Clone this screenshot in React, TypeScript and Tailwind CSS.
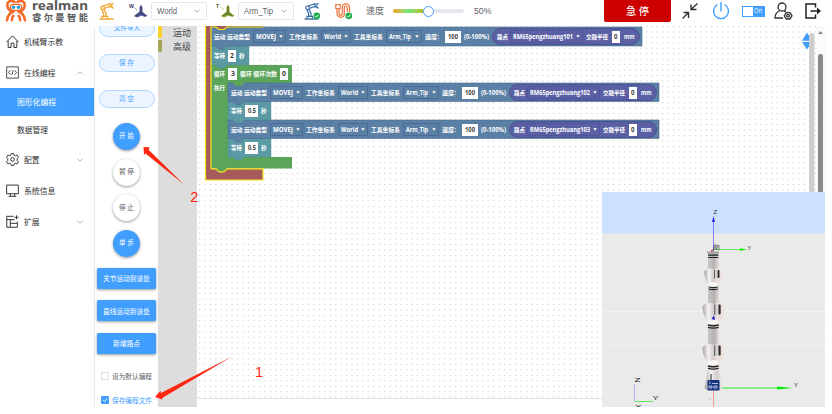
import React from "react";

type Kids = { children?: React.ReactNode };
const FIT = "spacingAndGlyphs";

/* Text fitted to a known width, used for the tiny block and toolbar labels. */
function Label({ w, h = 10, size, children, fill = "#fff", weight = 400, className = "" }: { w: number; h?: number; size: number; children: string; fill?: string; weight?: number; className?: string }) {
  return (
    <svg width={w} height={h} className={`shrink-0 overflow-visible ${className}`}>
      <text x="0" y={h / 2 + size * 0.37} fontSize={size} fontWeight={weight} fill={fill} textLength={w} lengthAdjust={FIT}>
        {children}
      </text>
    </svg>
  );
}

function Logo() {
  return (
    <svg width="22" height="22" viewBox="0 0 22 22" fill="none" className="shrink-0">
      <g stroke="#f26a2a" strokeWidth="2.6" strokeLinecap="round">
        <path d="M9.500 1.800C5 -.5 2.200 2 2.300 5.500C2.500 9 4.500 10.800 7.500 12C4.500 13.500 2.500 16 2 20.300" />
        <path d="M12.500 1.800C17 -.5 19.800 2 19.700 5.500C19.500 9 17.500 10.800 14.500 12C17.500 13.500 19.500 16 20 20.300" />
        <path d="M8.300 16C7 17.200 6.800 18.500 6.800 20.300M13.700 16C15 17.200 15.200 18.500 15.200 20.300" />
      </g>
      <rect x="5.300" y="4.300" width="11.400" height="6" rx="3" fill="#fff" stroke="#f26a2a" strokeWidth="1.300" />
      <circle cx="8.500" cy="7.300" r="1.700" fill="#159bd7" />
      <circle cx="13.500" cy="7.300" r="1.700" fill="#159bd7" />
    </svg>
  );
}

function RobotIcon({ color, check }: { color: string; check?: boolean }) {
  return (
    <svg width="17" height="18" viewBox="0 0 17 18" fill="none" stroke={color} strokeWidth="1.200" className="shrink-0">
      <path d="M.5 17H14.500" strokeWidth="1.400" />
      <path d="M3 16.500V14.300H8.500V16.500M4.700 14V12L3 7.500M7 14V11.500L5 7" />
      <circle cx="3.600" cy="5.800" r="1.800" />
      <path d="M4 4L11 1.800M5.300 6.500L11 4.300M11 1V5H12.800M12.800 2L14.500 1.200M12.800 5L14.500 6.500M12.800 1.500V5" />
      {check && <CheckDot x={12.800} y={13.800} />}
    </svg>
  );
}

function CheckDot({ x, y }: { x: number; y: number }) {
  return (
    <g stroke="none">
      <circle cx={x} cy={y} r="3.400" fill="#1dae4b" />
      <path d={`M${x - 1.700} ${y}l1.300 1.300l2.200 -2.500`} stroke="#fff" strokeWidth="1" fill="none" />
    </g>
  );
}

function CableIcon() {
  return (
    <svg width="18" height="17" viewBox="0 0 18 17" fill="none" stroke="#ee7339" strokeWidth="1.200" className="shrink-0">
      <path d="M.8 1.500H5.200V5.500H.8ZM2 5.500V9.500Q2 14.300 6 14.300Q9.300 14.300 9.300 10.500V5Q9.300 3 10.800 3Q12.300 3 12.300 5V9" />
      <path d="M4 5.500V9.500Q4 12.300 5.700 12.300Q7.300 12.300 7.300 10V4.800Q7.300 .8 10.800 .8Q14.500 .8 14.500 4.800V9" />
      <CheckDot x={13.800} y={12.800} />
    </svg>
  );
}

function AxesIcon({ letter, color, dark }: { letter: string; color: string; dark: string }) {
  return (
    <svg width="19" height="16" viewBox="0 0 19 16" className="shrink-0">
      <text x="0" y="4.500" fontSize="5" fontWeight="700" fill={dark}>{letter}</text>
      <path d="M4.500 4L8 7" stroke={color} strokeWidth=".8" strokeDasharray="1.200 .6" />
      <path d="M12 1.500L13.500 4.500V8.500L16 11L18.500 12.500L16.500 14L12.500 12.800L8 14.500L4.800 13L7.500 11L10.500 8.500V4.500Z" fill={color} />
      <path d="M12 3V10L16.500 12.800M12 10L7 13" stroke={dark} strokeWidth="1" fill="none" />
    </svg>
  );
}

function Chevron({ up, className = "" }: { up?: boolean; className?: string }) {
  return (
    <svg width="6" height="4" viewBox="0 0 6 4" fill="none" stroke="#888" strokeWidth=".7" className={className}>
      <path d={up ? "M.5 3.300L3 .8L5.500 3.300" : "M.5 .7L3 3.200L5.500 .7"} />
    </svg>
  );
}

function Select({ text, w }: { text: string; w: number }) {
  return (
    <div className="flex h-[18px] w-[56px] shrink-0 items-center justify-between rounded-[2px] border border-[#e4e7ed] pl-[5px] pr-[6px]">
      <Label w={w} size={8.500} fill="#606266" className="font-['Liberation_Sans']">{text}</Label>
      <Chevron />
    </div>
  );
}

function Header() {
  return (
    <header className="flex h-[26px] w-[825px] shrink-0 items-start bg-white">
      <div className="flex w-[99px] shrink-0 items-start gap-[5px] pl-[5px]">
        <Logo />
        <div className="flex flex-col gap-px">
          <Label w={56} h={11} size={12.500} fill="#58595b" weight={700} className="font-['Noto_Sans']">realman</Label>
          <Label w={56} h={11} size={9.500} fill="#58595b" weight={700}>睿 尔 曼 智 能</Label>
        </div>
      </div>
      <div className="flex h-[22px] items-center">
        <RobotIcon color="#f0a020" />
        <div className="ml-[13px]"><AxesIcon letter="W" color="#5b5f98" dark="#34366c" /></div>
        <div className="ml-[3px]"><Select text="World" w={20} /></div>
        <div className="ml-[9px]"><AxesIcon letter="T" color="#8da839" dark="#45621d" /></div>
        <div className="ml-[3px]"><Select text="Arm_Tip" w={29} /></div>
        <div className="ml-[10px]"><RobotIcon color="#356ca5" check /></div>
        <div className="ml-[14px]"><CableIcon /></div>
        <Label className="ml-[13px]" w={18} size={9} fill="#606266">速度</Label>
        <div className="ml-[9px] flex w-[71px] items-center">
          <span className="h-[4px] w-[30px] rounded-l-full bg-linear-to-r from-[#f29d16] via-[#69e878] to-[#b5bd25]" />
          <span className="h-[11px] w-[11px] shrink-0 rounded-full border border-[#409eff] bg-white" />
          <span className="h-[4px] grow rounded-r-full bg-[#e4e7ed]" />
        </div>
        <Label className="ml-[10px] font-['Liberation_Sans']" w={17.500} size={9} fill="#606266">50%</Label>
      </div>
      <div className="ml-auto flex h-[22px] items-center">
        <div className="flex h-[22px] w-[67px] items-center justify-center rounded-b-[2px] bg-[#cc0000]">
          <Label w={23} size={10.500} fill="#fff" weight={500}>急 停</Label>
        </div>
        <svg width="16" height="16" viewBox="0 0 16 16" className="ml-[11px]" fill="none" stroke="#333" strokeWidth="1.400">
          <path d="M15.500 .5L9.500 6M9 1.500V6.500H14.500M.5 15.500L6 10M1.500 9.500H6.500V15" />
        </svg>
        <svg width="18" height="18" viewBox="0 0 18 18" className="ml-[14px]" fill="none" stroke="#409eff" strokeWidth="1.400">
          <path d="M9 0V9.500M5.500 2.500A7.500 7.500 0 1 0 12.500 2.500" />
        </svg>
        <div className="ml-[12px] flex h-[11px] w-[23px] items-center bg-[#409eff] p-px">
          <span className="h-[9px] w-[10px] bg-white" />
          <Label className="ml-px" w={8} size={6.500}>On</Label>
        </div>
        <svg width="19" height="18" viewBox="0 0 19 18" className="ml-[9px]" fill="none" stroke="#333" strokeWidth="1.300">
          <circle cx="8" cy="5" r="4" />
          <path d="M5.800 8.500C2.500 10 1 12.500 1 16H9M10 9L12 9.500" />
          <path d="M12.200 10.600H16L18 13.800L16 17H12.200L10.300 13.800Z" />
          <circle cx="14.100" cy="13.800" r="1.400" />
        </svg>
        <svg width="17" height="16" viewBox="0 0 17 16" className="ml-[12px] mr-[3px]" fill="none" stroke="#222" strokeWidth="1.500">
          <path d="M10.500 4.500V1H1V15H10.500V11.500M5.500 8H14" />
          <path d="M12 4.500L16 8L12 11.500Z" fill="#222" stroke="none" />
        </svg>
      </div>
    </header>
  );
}

function NavItem({ icon, text, w, arrow }: { icon: React.ReactNode; text: string; w: number; arrow?: "up" | "down" }) {
  return (
    <div className="flex h-[31px] shrink-0 items-center pl-[6px] pr-[11px]">
      <svg width="13" height="13" viewBox="0 0 12 12" fill="none" stroke="#303133" strokeWidth=".9" className="mr-[4.500px] shrink-0">
        {icon}
      </svg>
      <Label w={w} size={7.800} fill="#303133">{text}</Label>
      {arrow && <Chevron up={arrow === "up"} className="ml-auto" />}
    </div>
  );
}

function Sidebar() {
  return (
    <nav className="flex w-[95px] shrink-0 flex-col border-r border-[#e6e9ee] bg-white">
      <NavItem w={39} text="机械臂示教" icon={<path d="M.5 6.500L6 .8L11.500 6.500M2 5.500V11.500H4.700V7.500H7.300V11.500H10V5.500" />} />
      <NavItem w={31.500} text="在线编程" arrow="up" icon={<path d="M.6 .8H11.400V11.200H.6ZM4 4L2.300 6L4 8M8 4L9.700 6L8 8M6.600 3.800L5.400 8.200" strokeWidth=".8" />} />
      <div className="flex h-[28px] shrink-0 items-center bg-[#409eff] pl-[17px]">
        <Label w={39} size={7.800}>图形化编程</Label>
      </div>
      <div className="flex h-[28px] shrink-0 items-center pl-[17px]">
        <Label w={31} size={7.800} fill="#303133">数据管理</Label>
      </div>
      <NavItem
        w={15.500}
        text="配置"
        arrow="down"
        icon={
          <>
            <path d="M4.900 .5H7.100L7.500 2L8.800 2.600L10.200 1.900L11.500 3.900L10.400 5V7L11.500 8.100L10.200 10.100L8.800 9.400L7.500 10L7.100 11.500H4.900L4.500 10L3.200 9.400L1.800 10.100L.5 8.100L1.600 7V5L.5 3.900L1.800 1.900L3.200 2.600L4.500 2Z" />
            <circle cx="6" cy="6" r="1.700" />
          </>
        }
      />
      <NavItem w={31.500} text="系统信息" icon={<path d="M.6 1H11.400V9H.6ZM4 9V11M8 9V11M2.500 11.400H9.500" />} />
      <NavItem w={15.500} text="扩展" arrow="down" icon={<path d="M7 1.200H.7V11.300H10.500V6M.7 4.300H8M4 4.300V11M4 7.700H10.500M9.700 .3V4M7.900 2.100H11.600" />} />
    </nav>
  );
}

function Pill({ children }: { children: string }) {
  return (
    <div className="flex h-[18px] w-[56px] items-center justify-center rounded-full border border-[#b3d8ff] bg-[#ecf5ff]">
      <Label w={children.length > 3 ? 26 : 15} size={6.500} fill="#409eff">{children}</Label>
    </div>
  );
}

function Round({ primary, children }: { primary?: boolean; children: string }) {
  return (
    <div className={`flex h-[27px] w-[27px] items-center justify-center rounded-full shadow-[0_1px_3px_rgba(0,0,0,0.4)] ${primary ? "bg-[#409eff]" : "bg-white"}`}>
      <Label w={15} size={6.500} fill={primary ? "#fff" : "#505256"}>{children}</Label>
    </div>
  );
}

function Block({ w, children }: { w: number; children: string }) {
  return (
    <div className="flex h-[21px] w-[59px] items-center justify-center rounded-[1.500px] bg-[#409eff] shadow-[0_1px_3px_rgba(0,0,0,0.4)]">
      <Label w={w} size={7}>{children}</Label>
    </div>
  );
}

function Controls() {
  return (
    <section className="flex w-[63px] shrink-0 flex-col items-center bg-white">
      <div className="-mt-[7.500px] flex flex-col gap-[17.700px]">
        <Pill>文件导入</Pill>
        <Pill>保 存</Pill>
        <Pill>清 空</Pill>
      </div>
      <div className="mt-[15px] flex flex-col gap-[8.700px]">
        <Round primary>开 始</Round>
        <Round>暂 停</Round>
        <Round>停 止</Round>
        <Round primary>单 步</Round>
      </div>
      <div className="mt-[11px] flex flex-col gap-[11.300px]">
        <Block w={47}>关节运动到该处</Block>
        <Block w={47}>直线运动到该处</Block>
        <Block w={27}>新增路点</Block>
      </div>
      <div className="mt-[17px] flex items-center gap-[3px] self-start pl-[6px]">
        <span className="h-[8px] w-[8px] rounded-[1px] border border-[#dcdfe6]" />
        <Label w={40} size={6.800} fill="#606266">设为默认编程</Label>
      </div>
      <div className="mt-[14.500px] flex items-center gap-[3px] self-start pl-[6px]">
        <svg width="8" height="8" viewBox="0 0 8 8">
          <rect width="8" height="8" rx="1" fill="#409eff" />
          <path d="M1.800 4L3.500 5.600L6.200 2.400" stroke="#fff" strokeWidth=".9" fill="none" />
        </svg>
        <Label w={40} size={6.800} fill="#409eff">保存编程文件</Label>
      </div>
    </section>
  );
}

function Toolbox() {
  return (
    <aside className="flex w-[39px] shrink-0 flex-col gap-[2px] bg-[#dddddd]">
      <div className="flex h-[12px] items-center">
        <span className="h-[12px] w-[4px] bg-[#fcd22d]" />
        <Label className="ml-[11px]" w={18} h={9} size={9} fill="#444">运动</Label>
      </div>
      <div className="flex h-[12px] items-center">
        <span className="h-[12px] w-[4px] bg-[#a5a55b]" />
        <Label className="ml-[11px]" w={18} h={9} size={9} fill="#444">高级</Label>
      </div>
    </aside>
  );
}

function T({ w, children }: { w: number; children: string }) {
  return <Label w={w} size={6.100} weight={700}>{children}</Label>;
}

function Field({ w, tw, children }: { w: number; tw: number; children: string }) {
  return (
    <span className="flex shrink-0 items-center justify-center bg-white" style={{ width: w, height: 12 }}>
      <Label w={tw} size={6.200} fill="#444" weight={700}>{children}</Label>
    </span>
  );
}

function Drop({ w, tw, children, pill }: { w: number; tw: number; children: string; pill?: boolean }) {
  return (
    <span
      className={`flex h-[12.500px] shrink-0 items-center justify-between rounded-[1px] border px-[2px] ${pill ? "border-[#50549a]" : "border-[#4c6a95]"}`}
      style={{ width: w }}
    >
      <T w={tw}>{children}</T>
      <svg width="4" height="3" viewBox="0 0 4 3"><path d="M.2 .3H3.800L2 2.700Z" fill="#fff" /></svg>
    </span>
  );
}

function MoveFields({ x, y, point, px }: { x: number; y: number; point: string; px: number }) {
  return (
    <div className="absolute flex h-[19px] w-[431px] items-center pl-[3px]" style={{ left: x, top: y }}>
      <T w={36}>运动 运动类型</T>
      <span className="w-[3px]" />
      <Drop w={33} tw={20}>MOVEJ</Drop>
      <span className="w-[3px]" />
      <T w={29}>工作坐标系</T>
      <span className="w-[3px]" />
      <Drop w={30} tw={17}>World</Drop>
      <span className="w-[3px]" />
      <T w={29}>工具坐标系</T>
      <span className="w-[3px]" />
      <Drop w={36} tw={22}>Arm_Tip</Drop>
      <span className="w-[3px]" />
      <T w={14}>速度:</T>
      <span className="w-[6px]" />
      <Field w={16} tw={10}>100</Field>
      <span className="w-[3px]" />
      <T w={25}>(0-100%)</T>
      <span className="w-[2.500px]" />
      <div className="flex h-[17px] shrink-0 items-center rounded-full border border-[#4d5193] bg-[#5b60a5] pl-[4px]" style={{ width: px }}>
        <T w={11}>路点</T>
        <span className="w-[2px]" />
        <Drop w={73} tw={60} pill>{point}</Drop>
        <span className="w-[3px]" />
        <T w={22}>交融半径</T>
        <span className="w-[4px]" />
        <Field w={8.500} tw={3.500}>0</Field>
        <span className="w-[3.500px]" />
        <T w={10.500}>mm</T>
      </div>
    </div>
  );
}

function WaitFields({ x, y, value, inner }: { x: number; y: number; value: string; inner?: boolean }) {
  return (
    <div className="absolute flex h-[19px] items-center gap-[3px] pl-[3px]" style={{ left: x, top: y }}>
      <T w={11}>等待</T>
      <Field w={inner ? 13 : 8} tw={inner ? 8 : 4}>{value}</Field>
      <T w={5.500}>秒</T>
    </div>
  );
}

function notched(x: number, y: number, w: number, h: number) {
  return `M${x} ${y}h5l3 3h5l3 -3H${x + w}V${y + h}H${x + 16}l-3 3h-5l-3 -3H${x}Z`;
}

/* Blockly program; coordinates are relative to the workspace origin. */
function Program() {
  return (
    <>
      <svg width="500" height="160" className="absolute left-0 top-0">
        <path d="M8 0H66V1H14V142.500H66V154H8Z" fill="#a55b5b" />
        <path d="M14 39H95V57H31V131H95V142.500H30l-3 3h-5l-3 -3H14Z" fill="#5ba55b" />
        <path d={notched(14, 20, 38, 19)} fill="#5b9aa5" stroke="#4c8994" strokeWidth=".4" />
        <path d={notched(14, 1, 431, 19)} fill="#5b80a5" stroke="#4a6c91" strokeWidth=".6" />
        {[94, 57].map((y) => (
          <g key={y}>
            <path d={notched(31, y + 18, 43, 19)} fill="#5b9aa5" stroke="#4c8994" strokeWidth=".4" />
            <path d={notched(31, y, 431, 18.500)} fill="#5b80a5" stroke="#4a6c91" strokeWidth=".6" />
          </g>
        ))}
        <path d="M36 57l3 3h5l3 -3Z" fill="#5ba55b" />
        <path d="M19 1l3 3h5l3 -3Z" fill="#a55b5b" />
        <path d="M8.500 0V154H66V142.800H30l-3 3h-5l-3 -3H14V1H19l3 2.500h5l3 -2.500H66" fill="none" stroke="#f7e81c" strokeWidth="1.200" />
      </svg>
      <MoveFields x={14} y={1} point="RM65pengzhuang101" px={148} />
      <WaitFields x={14} y={20} value="2" />
      <div className="absolute left-[17px] top-[39px] flex h-[18px] items-center gap-[3px]">
        <T w={11}>循环</T>
        <Field w={9} tw={4}>3</Field>
        <T w={37}>循环 循环次数</T>
        <Field w={8} tw={4}>0</Field>
      </div>
      <div className="absolute left-[17px] top-[57px] flex h-[10px] items-center">
        <T w={11}>执行</T>
      </div>
      <MoveFields x={31} y={57} point="RM65pengzhuang102" px={148} />
      <WaitFields x={31} y={75.500} value="0.5" inner />
      <MoveFields x={31} y={94} point="RM65pengzhuang103" px={148} />
      <WaitFields x={31} y={112.500} value="0.5" inner />
    </>
  );
}

/* One arm segment: neck, rounded shell on the left, motor cap on the right, joint ring below. */
function Joint({ y, s }: { y: number; s: number }) {
  return (
    <g transform={`translate(111.300 ${y}) scale(${s})`}>
      <path d="M2 -7Q10 -9 11 -1Q12 6 7 11L5 17H0Z" fill="#ecdfdc" />
      <path d="M-5 -20H5V-9Q4 -6 0 -6L-5 -8Z" fill="url(#neck)" />
      <path d="M1 -5.500C-3 -8 -11 -6 -11 -2Q-11 4 -8 9Q-6 12 -5.500 17H5L5 10L1 6Z" fill="url(#shell)" />
      <rect x="0" y="-5.500" width="7.500" height="11" rx="2" fill="#d8d3d1" />
      <path d="M1.500 -5V5.500" stroke="#444" strokeWidth="1" />
      <rect x="5.300" y="-5" width="2.200" height="10" rx="1" fill="#2a292b" />
      <ellipse cx="0" cy="12.500" rx="5.500" ry="2.800" fill="#f8f5f3" />
      <path d="M-5.500 15.800Q0 17.300 5.500 15.800M-5.500 18.300Q0 19.800 5.500 18.300" stroke="#252525" strokeWidth="1.400" fill="none" />
    </g>
  );
}

function Scene() {
  return (
    <svg width="223" height="216" viewBox="0 0 223 216" className="absolute left-[405px] top-[165.500px]">
      <defs>
        <linearGradient id="shell">
          <stop offset="0" stopColor="#a3a1a1" />
          <stop offset=".35" stopColor="#f5f3f2" />
          <stop offset=".7" stopColor="#d2cccc" />
          <stop offset="1" stopColor="#eee2df" />
        </linearGradient>
        <linearGradient id="neck">
          <stop offset="0" stopColor="#c9c6c5" />
          <stop offset=".6" stopColor="#b3b1b0" />
          <stop offset="1" stopColor="#dcd6d4" />
        </linearGradient>
      </defs>
      <rect width="223" height="216" fill="#eaeaea" />
      <rect width="223" height="41.500" fill="#cce0ff" />
      <path d="M0 119.500H223M0 139H223M0 153H223" stroke="#f3f3f3" strokeWidth=".7" />
      <path d="M111.500 28V61" stroke="#6464ff" strokeWidth=".8" />
      <path d="M111.500 24L113 30H110Z" fill="#2929e8" />
      <path d="M111.500 57.500H142" stroke="#42e842" strokeWidth=".8" />
      <path d="M138 56.300L145 57.500L138 58.700Z" fill="#00ed00" />
      <rect x="106" y="61" width="10.500" height="115" fill="url(#neck)" />
      <path d="M105 59.500H117V61.500H105Z" fill="#a4a4a4" />
      <path d="M110 59L113 55M112 58V53H114V58M115 58V53.500H117V58" stroke="#444" strokeWidth=".7" fill="none" />
      <rect x="109" y="58" width="1.500" height="1.500" fill="#e22" />
      <Joint y={158.500} s={0.98} />
      <Joint y={117.500} s={0.98} />
      <Joint y={82} s={0.82} />
      <path d="M106 63.200H116.500M106 65.500H116.500" stroke="#222" strokeWidth="1.200" />
      <path d="M109.500 127L112 123.500L113 128Z" fill="#1b1be6" />
      <path d="M106 178.500H117L120 196L118 198.500H105L102.500 196Z" fill="url(#shell)" />
      <path d="M109 182V189" stroke="#222" strokeWidth="1" />
      <rect x="105.500" y="188" width="12" height="10.500" rx="1" fill="#16347c" />
      <path d="M108 189.500V192M110 191.500H116M107 194H110V196H107ZM112 194H115V196H112Z" stroke="#dce6ff" strokeWidth=".8" fill="none" />
      <path d="M120 196H180" stroke="#28f028" strokeWidth="1" />
      <path d="M175 194.500L191 196L175 197.500Z" fill="#00eb00" />
      <path d="M111.500 199V216" stroke="#ff8585" strokeWidth=".8" />
      <path d="M32.500 192V209" stroke="#a9a9ff" strokeWidth=".8" />
      <path d="M32.500 209.500H51" stroke="#35e835" strokeWidth=".8" />
      <g fill="#222" className="font-['Liberation_Sans']">
        <text x="111.500" y="22" fontSize="4.500" textLength="3.500" lengthAdjust={FIT}>Z</text>
        <text x="145.500" y="57.500" fontSize="4.500" textLength="3.500" lengthAdjust={FIT}>Y</text>
        <text x="192" y="195" fontSize="4.500" textLength="4" lengthAdjust={FIT}>Y</text>
        <text x="32.500" y="189.800" fontSize="6" textLength="6" lengthAdjust={FIT}>Z</text>
        <text x="50.500" y="207.800" fontSize="6" textLength="6" lengthAdjust={FIT}>Y</text>
        <text x="33" y="217" fontSize="6" textLength="6.500" lengthAdjust={FIT}>X</text>
        <text x="107.500" y="208" fontSize="3.500" opacity=".6">r</text>
      </g>
    </svg>
  );
}

function Workspace({ children }: Kids) {
  return (
    <main className="relative h-[381px] w-[628px] shrink-0 overflow-hidden bg-white">
      <svg width="628" height="373" className="absolute left-0 top-0">
        <defs>
          <pattern id="grid" width="5.450" height="5.450" patternUnits="userSpaceOnUse">
            <rect x="2" y="0" width="1" height="1" fill="#c0c0c0" />
          </pattern>
        </defs>
        <rect width="620" height="372" fill="url(#grid)" />
        <path d="M0 372.500H612" stroke="#e2e2e2" />
        <path d="M605 14.700L610 6.500L615 14.700ZM605 16L610 23.500L615 16Z" fill="#409eff" />
        <rect x="612" y="7" width="5.500" height="165" rx="2.700" fill="#cecece" />
        <rect x="620" y="0" width="8" height="373" fill="#fafafa" />
        <path d="M621 8L623.500 5L626 8Z" fill="#888" />
        <rect x="621" y="28" width="5" height="150" rx="2" fill="#8b8b8b" />
      </svg>
      {children}
    </main>
  );
}

function Annotations() {
  return (
    <svg width="832" height="414" className="pointer-events-none absolute left-0 top-0 font-['Liberation_Sans']" fill="#fe2712">
      <path d="M143.500 147L149.500 147.300L148.800 150L184 184.500L145.500 153.500L144 155Z" />
      <path d="M155 397L160.500 390.800L161 393L232 356.500L163 397.500L162 399.500Z" />
      <text x="190.300" y="202" fontSize="14.500">2</text>
      <text x="255" y="377" fontSize="14.500">1</text>
    </svg>
  );
}

export default function App() {
  return (
    <div className="relative flex h-[414px] w-[832px] flex-col overflow-hidden bg-white font-['Open_Sans','Noto_Sans_CJK_SC',sans-serif] leading-none">
      <Header />
      <div className="flex h-[381px] w-[825px] shrink-0 overflow-hidden">
        <Sidebar />
        <Controls />
        <Toolbox />
        <Workspace>
          <Program />
          <Scene />
        </Workspace>
      </div>
      <Annotations />
    </div>
  );
}
